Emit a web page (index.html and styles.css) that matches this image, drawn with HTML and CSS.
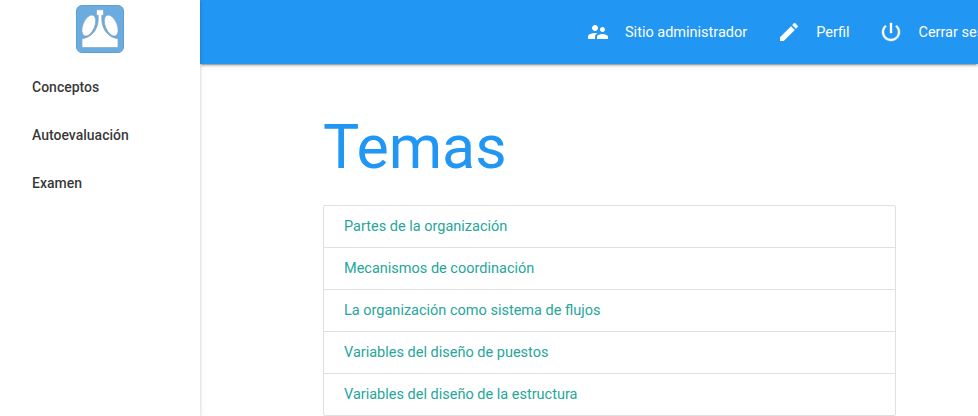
FILE: index.html
```html
<!DOCTYPE html>
<html lang="es">
<head>
<meta charset="utf-8">
<title>Temas</title>
<link rel="stylesheet" href="styles.css">
</head>
<body>
<aside class="sidenav">
  <svg class="logo" viewBox="0 0 48 48">
    <rect x=".5" y=".5" width="47" height="47" rx="5.500" fill="#6aabe0" stroke="#5f9fd2"/>
    <g fill="#fff" stroke="#86a3bc" stroke-width=".7">
      <path d="M20.500 4.800h7v5.400h-1.700v4.300c.2 10 6.500 18 16.200 19.300v8.700H6v-8.700c9.700-1.300 16-9.300 16.200-19.300v-4.300h-1.700z"/>
      <ellipse cx="12.800" cy="20.500" rx="5.900" ry="11.200" transform="rotate(23 12.800 20.500)"/>
      <ellipse cx="35.200" cy="20.500" rx="5.900" ry="11.200" transform="rotate(-23 35.200 20.500)"/>
    </g>
  </svg>
  <a>Conceptos</a>
  <a>Autoevaluación</a>
  <a>Examen</a>
</aside>
<div class="page">
  <nav class="navbar">
    <a><svg viewBox="0 0 24 24"><path d="M16.5 12c1.38 0 2.49-1.12 2.49-2.5S17.88 7 16.5 7C15.12 7 14 8.12 14 9.5s1.12 2.5 2.5 2.5zM9 11c1.66 0 2.99-1.34 2.99-3S10.66 5 9 5C7.34 5 6 6.34 6 8s1.34 3 3 3zm7.5 3c-1.83 0-5.5.92-5.5 2.75V19h11v-2.25c0-1.83-3.67-2.75-5.5-2.75zM9 13c-2.33 0-7 1.17-7 3.5V19h7v-2.25c0-.85.33-2.34 2.37-3.47C10.5 13.1 9.66 13 9 13z"/></svg>Sitio administrador</a>
    <a><svg viewBox="0 0 24 24"><path d="M3 17.25V21h3.75L17.81 9.94l-3.75-3.75L3 17.25zM20.71 7.04c.39-.39.39-1.02 0-1.41l-2.34-2.34c-.39-.39-1.02-.39-1.41 0l-1.83 1.83 3.75 3.75 1.83-1.83z"/></svg>Perfil</a>
    <a><svg class="power" viewBox="0 0 24 24"><path d="M13 3h-2v10h2V3zm4.83 2.17l-1.42 1.42C17.99 7.86 19 9.81 19 12c0 3.87-3.13 7-7 7s-7-3.13-7-7c0-2.19 1.01-4.14 2.58-5.42L6.17 5.17C4.23 6.82 3 9.26 3 12c0 4.97 4.03 9 9 9s9-4.03 9-9c0-2.74-1.23-5.18-3.17-6.83z"/></svg>Cerrar sesión</a>
  </nav>
  <main>
    <h1>Temas</h1>
    <ul class="collection">
      <li>Partes de la organización</li>
      <li>Mecanismos de coordinación</li>
      <li>La organización como sistema de flujos</li>
      <li>Variables del diseño de puestos</li>
      <li>Variables del diseño de la estructura</li>
    </ul>
  </main>
</div>
</body>
</html>
```
FILE: styles.css
```css
* { box-sizing: border-box; }
body {
  margin: 0;
  height: 416px;
  display: flex;
  overflow: hidden;
  background: #fff;
  font-family: Roboto, sans-serif;
  font-size: 14.5px;
}
.sidenav {
  flex: 0 0 200px;
  display: flex;
  flex-direction: column;
  padding-top: 5px;
  position: relative;
  z-index: 2;
  background: #fff;
  box-shadow: 0 2px 2px 0 rgba(0,0,0,.14), 0 1px 5px 0 rgba(0,0,0,.12), 0 3px 1px -2px rgba(0,0,0,.2);
}
.logo { width: 48px; height: 48px; margin: 0 auto 10px; display: block; }
.sidenav a {
  height: 48px;
  line-height: 48px;
  padding: 0 32px;
  font-size: 14px;
  font-weight: 500;
  color: rgba(0,0,0,.8);
}
.page { flex: 1; min-width: 0; }
.navbar {
  height: 64px;
  padding-left: 371px;
  display: flex;
  overflow: hidden;
  white-space: nowrap;
  background: #2196f3;
  color: #fff;
  box-shadow: 0 2px 2px 0 rgba(0,0,0,.14), 0 1px 5px 0 rgba(0,0,0,.12), 0 3px 1px -2px rgba(0,0,0,.2);
}
.navbar a { display: flex; flex: none; align-items: center; padding: 0 15px; }
.navbar svg { width: 24px; height: 24px; margin-right: 15px; fill: #fff; }
.navbar .power { stroke: #fff; stroke-width: .4; }
main { margin-left: 123px; width: 573px; }
h1 {
  margin: 50px 0 24px;
  font-size: 60.9px;
  line-height: 67px;
  font-weight: 400;
  color: #2196f3;
}
.collection {
  margin: 0;
  padding: 0;
  list-style: none;
  border: 1px solid #e0e0e0;
  border-radius: 2px;
}
.collection li {
  height: 42px;
  line-height: 41px;
  padding: 0 20px;
  color: #26a69a;
  border-bottom: 1px solid #e0e0e0;
}
.collection li:last-child { height: 41px; border-bottom: 0; }
```
